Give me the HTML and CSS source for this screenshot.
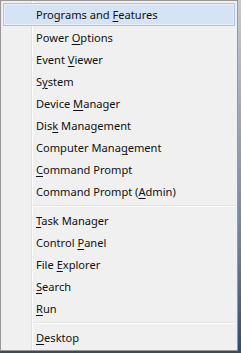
FILE: index.html
```html
<!DOCTYPE html>
<html lang="en">
<head>
  <meta charset="UTF-8" />
  <title>Quick Link Menu</title>
  <link rel="stylesheet" href="styles.css">
</head>
<body>
  <ul class="menu">
    <li class="item active">Programs and <u>F</u>eatures</li>
    <li class="item">Power <u>O</u>ptions</li>
    <li class="item">Event <u>V</u>iewer</li>
    <li class="item">S<u>y</u>stem</li>
    <li class="item">Device <u>M</u>anager</li>
    <li class="item">Dis<u>k</u> Management</li>
    <li class="item">Computer Mana<u>g</u>ement</li>
    <li class="item"><u>C</u>ommand Prompt</li>
    <li class="item">Command Prompt (<u>A</u>dmin)</li>
    <li class="sep"></li>
    <li class="item"><u>T</u>ask Manager</li>
    <li class="item">Control <u>P</u>anel</li>
    <li class="item">File <u>E</u>xplorer</li>
    <li class="item"><u>S</u>earch</li>
    <li class="item"><u>R</u>un</li>
    <li class="sep"></li>
    <li class="item"><u>D</u>esktop</li>
  </ul>
</body>
</html>
```

FILE: styles.css
```css
body {
  margin: 0;
  width: 241px;
  height: 353px;
  overflow: hidden;
  background: linear-gradient(to bottom, #c7cbd0, #6f8094 70%, #2c4c70);
  font-family: "Noto Sans", "Open Sans", sans-serif;
  font-size: 11.1px;
}

.menu {
  list-style: none;
  margin: 0;
  padding: 3px 2px 2px 2px;
  width: 232px;
  border: 1px solid #979797;
  background: linear-gradient(to right, #f0f0f0 30px, #e2e3e3 30px, #e2e3e3 31px, #ffffff 31px, #ffffff 32px, #f0f0f0 32px);
}

.item {
  height: 22px;
  line-height: 22px;
  padding-top: 1px;
  padding-left: 33px;
  color: #111;
  white-space: nowrap;
  box-sizing: border-box;
}

.item u {
  text-decoration: underline;
  text-underline-offset: 2px;
}

.item.active {
  background: #d5e3f4;
  border: 1px solid #a9c4e6;
  padding-top: 0;
  padding-left: 32px;
  line-height: 22px;
  margin-top: -1px;
  height: 23px;
  box-shadow: inset 0 0 0 1px #e6effa;
}

.sep {
  height: 7px;
  margin-left: 30px;
  background: linear-gradient(to bottom, transparent 3px, #e2e3e3 3px, #e2e3e3 4px, #ffffff 4px, #ffffff 5px, transparent 5px);
}
```
